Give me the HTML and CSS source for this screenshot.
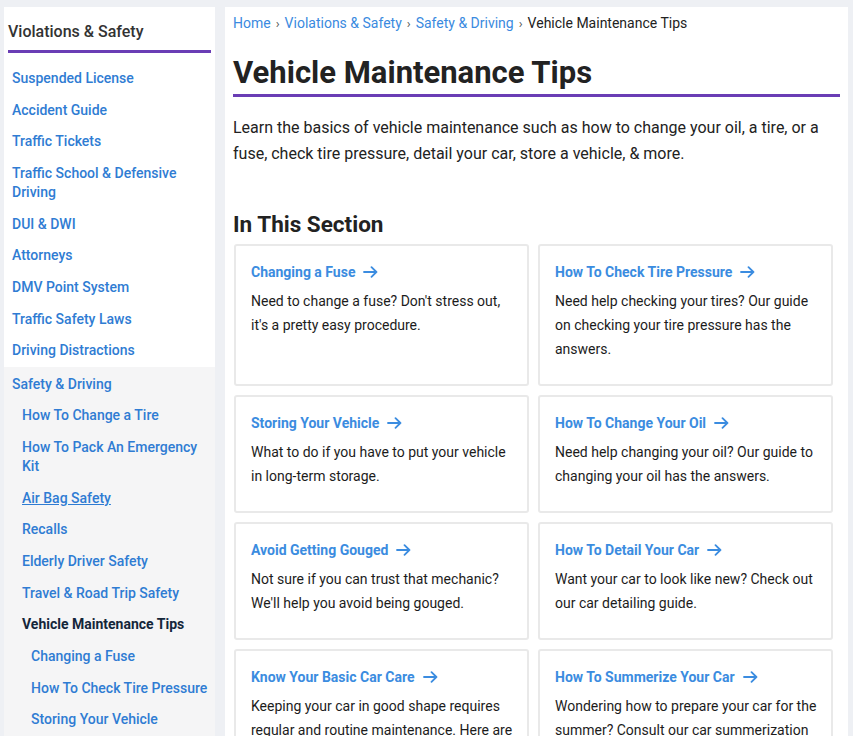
FILE: index.html
```html
<!DOCTYPE html>
<html lang="en">
<head>
<meta charset="utf-8">
<title>Vehicle Maintenance Tips</title>
<link rel="stylesheet" href="styles.css">
</head>
<body>
<aside class="sidebar">
  <h2 class="side-title">Violations &amp; Safety</h2>
  <ul class="side-list">
    <li><a class="side-link" href="#">Suspended License</a></li>
    <li><a class="side-link" href="#">Accident Guide</a></li>
    <li><a class="side-link" href="#">Traffic Tickets</a></li>
    <li><a class="side-link" href="#">Traffic School &amp; Defensive Driving</a></li>
    <li><a class="side-link" href="#">DUI &amp; DWI</a></li>
    <li><a class="side-link" href="#">Attorneys</a></li>
    <li><a class="side-link" href="#">DMV Point System</a></li>
    <li><a class="side-link" href="#">Traffic Safety Laws</a></li>
    <li><a class="side-link" href="#">Driving Distractions</a></li>
    <li class="side-group">
      <a class="side-link" href="#">Safety &amp; Driving</a>
      <ul class="side-sub">
        <li><a class="side-link" href="#">How To Change a Tire</a></li>
        <li><a class="side-link" href="#">How To Pack An Emergency Kit</a></li>
        <li><a class="side-link hover" href="#">Air Bag Safety</a></li>
        <li><a class="side-link" href="#">Recalls</a></li>
        <li><a class="side-link" href="#">Elderly Driver Safety</a></li>
        <li><a class="side-link" href="#">Travel &amp; Road Trip Safety</a></li>
        <li>
          <span class="side-link current">Vehicle Maintenance Tips</span>
          <ul class="side-sub">
            <li><a class="side-link" href="#">Changing a Fuse</a></li>
            <li><a class="side-link" href="#">How To Check Tire Pressure</a></li>
            <li><a class="side-link" href="#">Storing Your Vehicle</a></li>
            <li><a class="side-link" href="#">How To Change Your Oil</a></li>
            <li><a class="side-link" href="#">Avoid Getting Gouged</a></li>
          </ul>
        </li>
      </ul>
    </li>
  </ul>
</aside>

<main class="main">
  <nav class="crumbs">
    <a href="#">Home</a><span class="sep">›</span><a href="#">Violations &amp; Safety</a><span class="sep">›</span><a href="#">Safety &amp; Driving</a><span class="sep">›</span><span class="crumb-current">Vehicle Maintenance Tips</span>
  </nav>
  <h1 class="page-title">Vehicle Maintenance Tips</h1>
  <p class="intro">Learn the basics of vehicle maintenance such as how to change your oil, a tire, or a fuse, check tire pressure, detail your car, store a vehicle, &amp; more.</p>

  <h2 class="section-title">In This Section</h2>
  <div class="cards">
    <div class="card">
      <a class="card-title" href="#">Changing a Fuse<svg class="arrow" viewBox="0 0 15 12" width="15" height="12"><path d="M1 6h12.5M8.5 1.2 13.4 6 8.5 10.8"/></svg></a>
      <p class="card-text">Need to change a fuse? Don't stress out, it's a pretty easy procedure.</p>
    </div>
    <div class="card">
      <a class="card-title" href="#">How To Check Tire Pressure<svg class="arrow" viewBox="0 0 15 12" width="15" height="12"><path d="M1 6h12.5M8.5 1.2 13.4 6 8.5 10.8"/></svg></a>
      <p class="card-text">Need help checking your tires? Our guide on checking your tire pressure has the answers.</p>
    </div>
    <div class="card">
      <a class="card-title" href="#">Storing Your Vehicle<svg class="arrow" viewBox="0 0 15 12" width="15" height="12"><path d="M1 6h12.5M8.5 1.2 13.4 6 8.5 10.8"/></svg></a>
      <p class="card-text">What to do if you have to put your vehicle in long-term storage.</p>
    </div>
    <div class="card">
      <a class="card-title" href="#">How To Change Your Oil<svg class="arrow" viewBox="0 0 15 12" width="15" height="12"><path d="M1 6h12.5M8.5 1.2 13.4 6 8.5 10.8"/></svg></a>
      <p class="card-text">Need help changing your oil? Our guide to changing your oil has the answers.</p>
    </div>
    <div class="card">
      <a class="card-title" href="#">Avoid Getting Gouged<svg class="arrow" viewBox="0 0 15 12" width="15" height="12"><path d="M1 6h12.5M8.5 1.2 13.4 6 8.5 10.8"/></svg></a>
      <p class="card-text">Not sure if you can trust that mechanic? We'll help you avoid being gouged.</p>
    </div>
    <div class="card">
      <a class="card-title" href="#">How To Detail Your Car<svg class="arrow" viewBox="0 0 15 12" width="15" height="12"><path d="M1 6h12.5M8.5 1.2 13.4 6 8.5 10.8"/></svg></a>
      <p class="card-text">Want your car to look like new? Check out our car detailing guide.</p>
    </div>
    <div class="card">
      <a class="card-title" href="#">Know Your Basic Car Care<svg class="arrow" viewBox="0 0 15 12" width="15" height="12"><path d="M1 6h12.5M8.5 1.2 13.4 6 8.5 10.8"/></svg></a>
      <p class="card-text">Keeping your car in good shape requires regular and routine maintenance. Here are some basics to know.</p>
    </div>
    <div class="card">
      <a class="card-title" href="#">How To Summerize Your Car<svg class="arrow" viewBox="0 0 15 12" width="15" height="12"><path d="M1 6h12.5M8.5 1.2 13.4 6 8.5 10.8"/></svg></a>
      <p class="card-text">Wondering how to prepare your car for the summer? Consult our car summerization guide.</p>
    </div>
  </div>
</main>
</body>
</html>
```
FILE: styles.css
```css
* { box-sizing: border-box; }

html, body { height: 100%; }

body {
  margin: 0;
  padding: 7px 5px 0 4px;
  background: #eef0f4;
  font-family: Roboto, "Liberation Sans", Arial, sans-serif;
  color: #222;
  display: flex;
  align-items: stretch;
  gap: 10px;
  overflow: hidden;
}

a { text-decoration: none; }

ul { list-style: none; margin: 0; padding: 0; }

/* Sidebar */
.sidebar {
  width: 211px;
  flex: 0 0 211px;
  background: #fff;
  min-height: 100%;
  display: flex;
  flex-direction: column;
}

.side-title {
  margin: 0 4px;
  padding: 15px 0 8px;
  font-size: 16px;
  line-height: 20px;
  font-weight: 500;
  color: #333;
  border-bottom: 3px solid #6a3db5;
}

.side-list {
  margin-top: 9.5px;
  flex: 1;
  display: flex;
  flex-direction: column;
}

.side-link {
  display: block;
  padding: 6.35px 4px 6.35px 8px;
  font-size: 14px;
  line-height: 19px;
  font-weight: 500;
  color: #2f7cd3;
}

.side-link.hover { text-decoration: underline; }

.side-group {
  background: #f5f5f6;
  flex: 1;
  padding-top: 1.5px;
}

.side-sub { padding-left: 10px; }
.side-sub .side-sub { padding-left: 9px; }

.side-link.current {
  color: #14263a;
  font-weight: 700;
}

/* Main */
.main {
  flex: 0 0 623px;
  width: 623px;
  background: #fff;
  padding: 6px 8px 20px;
  min-height: 100%;
}

.crumbs {
  font-size: 14px;
  line-height: 20px;
  color: #222;
}

.crumbs a { color: #3a8ae0; }

.sep {
  color: #555;
  margin: 0 5px;
  font-size: 13px;
}

.page-title {
  margin: 21px 0 0;
  padding-bottom: 3px;
  font-size: 31px;
  line-height: 36px;
  font-weight: 700;
  color: #222;
  border-bottom: 3px solid #6a3db5;
}

.intro {
  margin: 18px 0 0;
  font-size: 16px;
  line-height: 26px;
  color: #222;
}

.section-title {
  margin: 43px 0 6px;
  font-size: 22.5px;
  line-height: 28px;
  font-weight: 700;
  color: #222;
}

.cards {
  display: grid;
  grid-template-columns: 295px 295px;
  gap: 9px 9px;
  margin-left: 1px;
}

.card {
  border: 2px solid #e9e9e9;
  border-radius: 3px;
  padding: 17px 10px 23px 15px;
}

.card-title {
  display: flex;
  align-items: center;
  font-size: 14px;
  line-height: 18px;
  font-weight: 700;
  color: #3b8ce0;
}

.arrow {
  margin-left: 8px;
  fill: none;
  stroke: #3b8ce0;
  stroke-width: 1.8;
  stroke-linecap: round;
  stroke-linejoin: round;
}

.card-text {
  margin: 8px 0 0;
  font-size: 14px;
  line-height: 24px;
  color: #1c1c1c;
}
```
